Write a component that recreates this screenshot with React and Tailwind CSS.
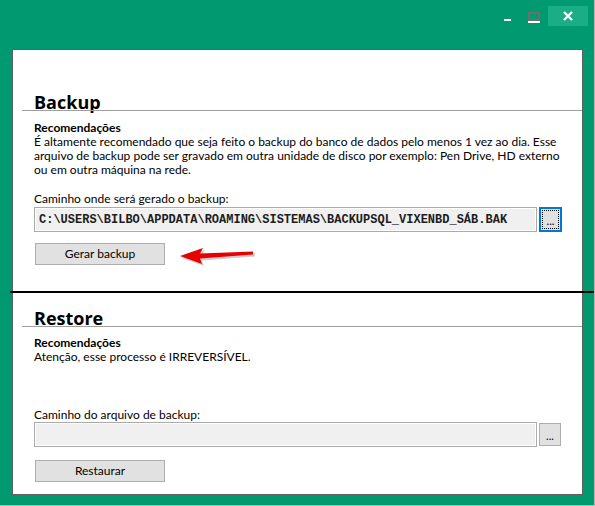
const UI = { fontFamily: '"Segoe UI", Lato, "Liberation Sans", sans-serif' };
const MONO = { fontFamily: '"Liberation Mono", "DejaVu Sans Mono", monospace' };
const HEAD = { fontFamily: '"Open Sans", "Noto Sans", sans-serif' };

const TitleBar = () => (
  <div className="flex h-[49px] items-start justify-end pr-[6px]">
    <div className="mt-[19px] h-[2px] w-[7px] bg-white" />
    <div className="ml-[17px] mt-[12px] flex h-[11px] w-[12px] flex-col">
      <div className="h-[9px] w-[12px] border-2 border-[#6e6e6e]" />
      <div className="h-[2px] w-[12px] bg-white" />
    </div>
    <div className="ml-[8px] mt-[6px] flex h-[20px] w-[40px] items-center justify-center bg-[#1aad86]">
      <svg width="10" height="10" viewBox="0 0 10 10">
        <path d="M1 1 L9 9 M9 1 L1 9" stroke="white" strokeWidth="2.4" />
      </svg>
    </div>
  </div>
);

const Heading = ({ children }) => (
  <>
    <h2 className="h-[18px] pl-[21px] text-[18px] font-bold leading-[18px] text-black" style={HEAD}>
      {children}
    </h2>
    <div className="-mt-px ml-[9px] h-px bg-[#a0a0a0]" />
  </>
);

const PathRow = ({ value, focused }) => (
  <div className="flex items-start pl-[21px]">
    <div
      className="flex h-[25px] w-[503px] items-center border border-[#ababab] bg-[#f0f0f0] pl-[4px] text-[12px] font-bold text-[#1c1c1c] shadow-[inset_0_0_0_1px_#ffffff]"
      style={MONO}
    >
      {value}
    </div>
    {focused ? (
      <div className="ml-[2px] h-[25px] w-[23px] border-2 border-[#0078d7] bg-[#e1e1e1] p-px">
        <div className="flex h-full w-full items-end justify-center border border-dotted border-black pb-[3px] text-[11px] leading-[8px]">
          ...
        </div>
      </div>
    ) : (
      <div className="ml-[2px] mt-px flex h-[23px] w-[22px] items-end justify-center border border-[#adadad] bg-[#e1e1e1] pb-[5px] text-[11px] leading-[8px]">
        ...
      </div>
    )}
  </div>
);

const WinButton = ({ children }) => (
  <button className="flex h-[22px] w-[130px] shrink-0 items-center justify-center border border-[#adadad] bg-[#e1e1e1] text-[12px] text-black">
    {children}
  </button>
);

const RedArrow = () => (
  <svg width="78" height="22" viewBox="0 0 78 22" className="ml-[14px] mt-[3px] shrink-0">
    <g transform="translate(2 2)" fill="#9a9a9a" opacity="0.5">
      <polygon points="1,10 24,2 21,7.5 74,5.5 74,8.5 21,12.5 23,18" />
    </g>
    <polygon points="1,10 24,2 21,7.5 74,5.5 74,8.5 21,12.5 23,18" fill="#e60000" />
  </svg>
);

export default function App() {
  return (
    <div className="h-[506px] w-[595px] overflow-hidden border-r border-b border-[#b8b8b8] bg-[#01996f]" style={UI}>
      <TitleBar />
      <div className="ml-[12px] flex h-[446px] w-[571px] flex-col border border-[#5f5f5f] bg-white text-[12px] leading-[14px] text-black">
        <div className="mt-[43px]" />
        <Heading>Backup</Heading>

        <div className="mt-[10px] pl-[21px]">
          <div className="font-bold">Recomendações</div>
          <p>
            É altamente recomendado que seja feito o backup do banco de dados pelo menos 1 vez ao dia. Esse
            <br />
            arquivo de backup pode ser gravado em outra unidade de disco por exemplo: Pen Drive, HD externo
            <br />
            ou em outra máquina na rede.
          </p>
        </div>

        <div className="mt-[15px] pl-[21px]">Caminho onde será gerado o backup:</div>
        <div className="mt-px">
          <PathRow value="C:\USERS\BILBO\APPDATA\ROAMING\SISTEMAS\BACKUPSQL_VIXENBD_SÁB.BAK" focused />
        </div>

        <div className="mt-[11px] flex h-[22px] items-start overflow-visible pl-[22px]">
          <WinButton>Gerar backup</WinButton>
          <RedArrow />
        </div>

        <div className="-ml-[3px] -mr-[14px] mt-[26px] h-[2px] bg-black" />

        <div className="mt-[16px]" />
        <Heading>Restore</Heading>

        <div className="mt-[9px] pl-[21px]">
          <div className="font-bold">Recomendações</div>
          <p>Atenção, esse processo é IRREVERSÍVEL.</p>
        </div>

        <div className="mt-[44px] pl-[21px]">Caminho do arquivo de backup:</div>
        <div>
          <PathRow value="" />
        </div>

        <div className="mt-[13px] pl-[22px]">
          <WinButton>Restaurar</WinButton>
        </div>
      </div>
    </div>
  );
}
